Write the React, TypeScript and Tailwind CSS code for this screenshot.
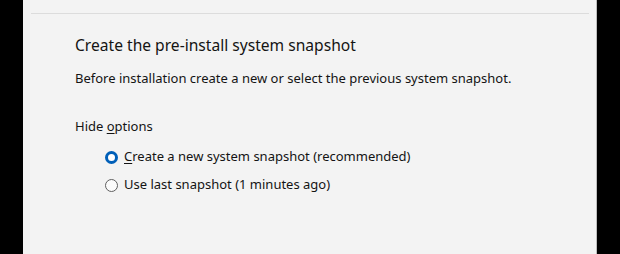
import React from "react";

const Radio = ({ checked, label, underline }: { checked?: boolean; label: string; underline?: number }) => (
  <label className="flex items-center gap-[6px] h-[28px]">
    {checked ? (
      <span className="w-[13px] h-[13px] rounded-full border-[3.5px] border-[#005fb8] bg-white" />
    ) : (
      <span className="w-[13px] h-[13px] rounded-full border border-[#5f5f5f] bg-[#fbfbfb]" />
    )}
    <span>
      {underline !== undefined ? (
        <>
          {label.slice(0, underline)}
          <span className="underline underline-offset-2">{label[underline]}</span>
          {label.slice(underline + 1)}
        </>
      ) : (
        label
      )}
    </span>
  </label>
);

export default function App() {
  return (
    <div className="w-[620px] h-[254px] bg-black flex pl-[23px] overflow-hidden" style={{ fontFamily: '"Noto Sans", "Open Sans", sans-serif' }}>
      <div className="w-[574px] h-full bg-[#f3f3f3] border-r border-[#bdbdbd] flex flex-col text-[#141414]">
        <div className="mt-[13px] ml-[8px] mr-[7px] h-px bg-[#dcdcdc]" />
        <div className="pl-[52px] pt-[20px]">
          <h1 className="text-[15.6px] leading-[22px]">Create the pre-install system snapshot</h1>
          <p className="text-[13px] leading-[18px] mt-[13px]">
            Before installation create a new or select the previous system snapshot.
          </p>
          <p className="text-[13px] leading-[18px] mt-[30px]">
            Hide <span className="underline underline-offset-2">o</span>ptions
          </p>
          <div className="pl-[30px] mt-[8px] text-[13px]">
            <Radio checked label="Create a new system snapshot (recommended)" underline={0} />
            <Radio label="Use last snapshot (1 minutes ago)" />
          </div>
        </div>
      </div>
    </div>
  );
}
